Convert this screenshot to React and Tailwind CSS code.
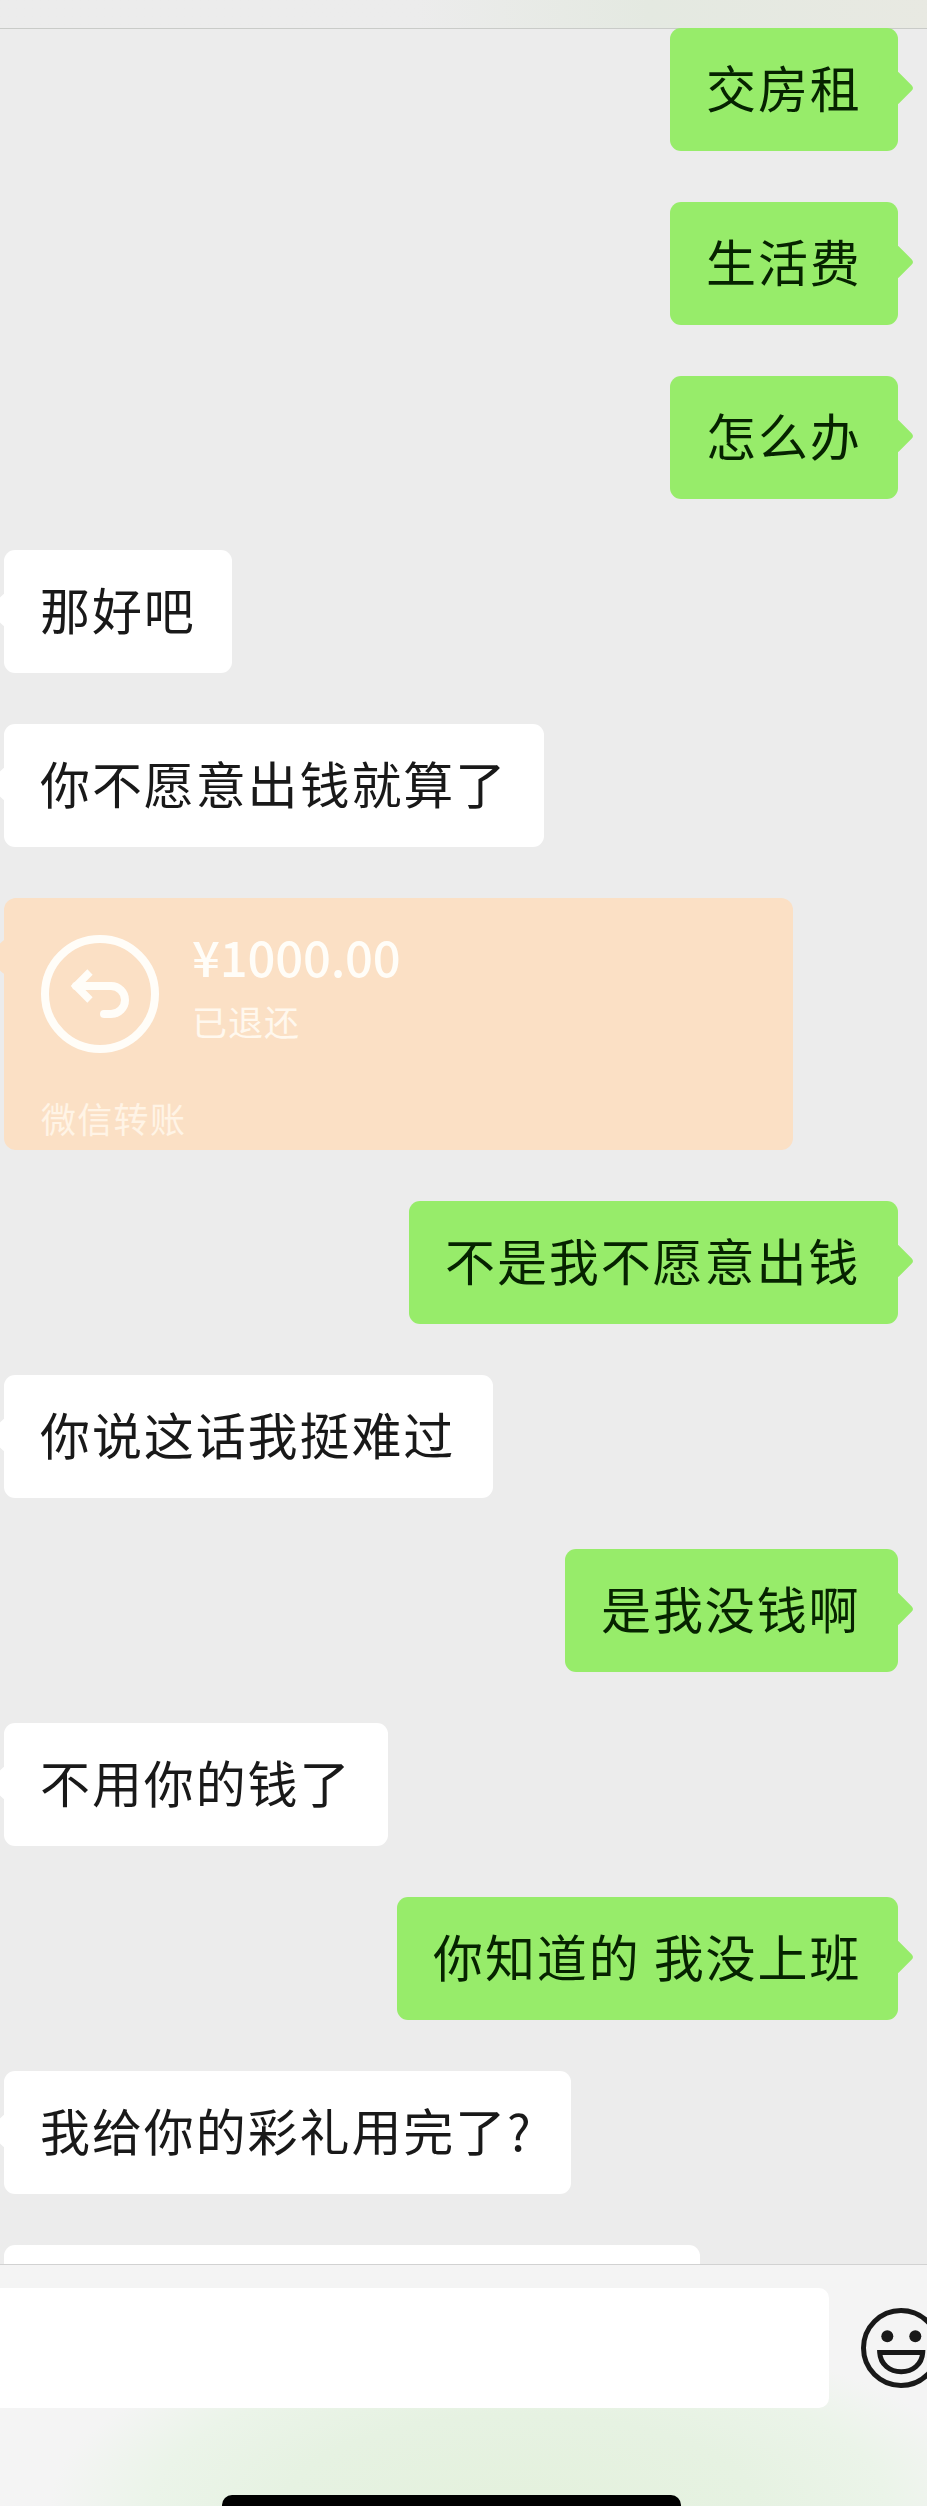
const messages = [
  { id: 1, from: "me", text: "交房租", width: "w-[228px]" },
  { id: 2, from: "me", text: "生活费", width: "w-[228px]" },
  { id: 3, from: "me", text: "怎么办", width: "w-[228px]" },
  { id: 4, from: "other", text: "那好吧", width: "w-[228px]" },
  { id: 5, from: "other", text: "你不愿意出钱就算了", width: "w-[540px]" },
  { id: 6, from: "other", type: "transfer", amount: "¥1000.00", status: "已退还", label: "微信转账" },
  { id: 7, from: "me", text: "不是我不愿意出钱", width: "w-[489px]" },
  { id: 8, from: "other", text: "你说这话我挺难过", width: "w-[489px]" },
  { id: 9, from: "me", text: "是我没钱啊", width: "w-[333px]" },
  { id: 10, from: "other", text: "不用你的钱了", width: "w-[384px]" },
  { id: 11, from: "me", text: "你知道的 我没上班", width: "w-[501px]" },
  { id: 12, from: "other", text: "我给你的彩礼用完了?", width: "w-[567px]" },
  { id: 13, from: "other", text: "", width: "w-[696px]" },
];

const ReturnIcon = () => (
  <svg className="h-[118px] w-[118px] shrink-0" viewBox="0 0 118 118" fill="none" stroke="#fffdf8">
    <circle cx="59" cy="59" r="55" strokeWidth="8" />
    <path d="M35 51H70a14 14 0 0 1 0 28H63" strokeWidth="8" strokeLinecap="round" />
    <path d="M49 37L35 51L49 65" strokeWidth="7.500" />
  </svg>
);

const SmileIcon = () => (
  <svg className="h-20 w-20 shrink-0" viewBox="0 0 80 80" fill="none" stroke="#191919" strokeWidth="5">
    <circle cx="40" cy="40" r="37.500" />
    <circle cx="26.300" cy="28.300" r="6" fill="#191919" stroke="none" />
    <circle cx="54.300" cy="28.300" r="6" fill="#191919" stroke="none" />
    <path d="M18.700 44.500H61.700C61 56.500 51.500 63.700 40.200 63.700S19.400 56.500 18.700 44.500Z" />
  </svg>
);

const Transfer = ({ message }) => (
  <div className="relative ml-1 flex h-[252px] w-[789px] shrink-0 flex-col rounded-[12px] bg-[#fbe0c5] px-[37px] pt-[37px] text-[#fff8ee]">
    <span className="absolute top-[46px] -left-[12px] h-[26px] w-[26px] rotate-45 rounded-[4px] bg-[#fbe0c5]" />
    <div className="flex h-[118px] gap-[33px]">
      <ReturnIcon />
      <div className="flex flex-col">
        <span className="h-[50px] text-[49px] leading-[41px] font-medium tracking-[-0.2px] text-[#fffdf8]">
          {message.amount}
        </span>
        <span className="mt-[14px] text-[35px] leading-[44px] tracking-[1px]">{message.status}</span>
      </div>
    </div>
    <span className="mt-[43px] text-[35px] leading-[44px] tracking-[1.3px] text-[#fff4e6]">{message.label}</span>
  </div>
);

const Bubble = ({ message }) => {
  const mine = message.from === "me";

  return (
    <div
      className={`relative h-[123px] shrink-0 rounded-[11px] pl-9 text-[50px] leading-[117px] tracking-[1.9px] whitespace-nowrap ${message.width} ${
        mine ? "mr-[29px] self-end bg-[#97ec6a] text-[#062300]" : "ml-1 bg-white text-[#191919]"
      }`}
    >
      <span
        className={`absolute top-[47px] h-[26px] w-[26px] rotate-45 rounded-[4px] ${
          mine ? "-right-[11px] bg-[#97ec6a]" : "-left-[11px] bg-white"
        }`}
      />
      <span className="relative">{message.text}</span>
    </div>
  );
};

const App = () => {
  return (
    <div className="flex h-[2506px] w-[927px] flex-col overflow-hidden bg-[#ececec] font-['Noto_Sans_CJK_SC',sans-serif]">
      <header className="h-[29px] shrink-0 border-b border-[#c9cbc8] bg-linear-to-r from-[#ececec] from-45% via-[#e4e9e1] via-70% to-[#e8e9e2]" />

      <main className="-mt-px flex h-[2236px] shrink-0 flex-col gap-[51px] overflow-hidden">
        {messages.map((message) =>
          message.type === "transfer" ? (
            <Transfer key={message.id} message={message} />
          ) : (
            <Bubble key={message.id} message={message} />
          )
        )}
      </main>

      <footer className="flex h-[242px] shrink-0 flex-col justify-between border-t border-[#d2d2d2] bg-[#f4f4f4] bg-[radial-gradient(ellipse_470px_180px_at_520px_240px,#e4f1dd_0%,#e6f2e2_50%,#ebf4e9_78%,#f4f4f4_100%)] pt-[23px]">
        <div className="flex h-[120px] items-center gap-[32px]">
          <div className="h-[120px] w-[829px] shrink-0 rounded-r-[10px] bg-white" />
          <SmileIcon />
        </div>
        <div className="ml-[222px] h-[11px] w-[459px] rounded-t-[10px] bg-black" />
      </footer>
    </div>
  );
};

export default App;
